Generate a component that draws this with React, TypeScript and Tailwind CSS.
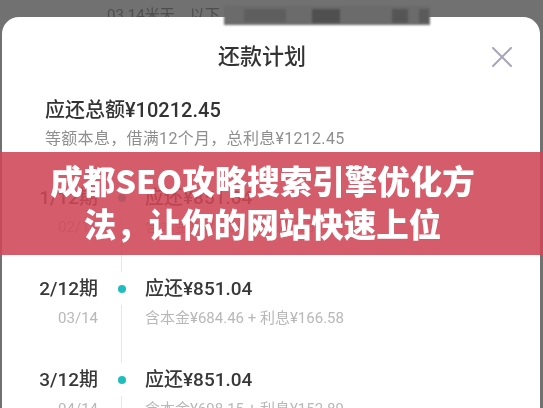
import React from "react";

type Installment = {
  period: string;
  date: string;
  amount: string;
  principal: string;
  interest: string;
};

const installments: Installment[] = [
  { period: "1/12期", date: "02/14", amount: "¥851.04", principal: "¥671.04", interest: "¥180.00" },
  { period: "2/12期", date: "03/14", amount: "¥851.04", principal: "¥684.46", interest: "¥166.58" },
  { period: "3/12期", date: "04/14", amount: "¥851.04", principal: "¥698.15", interest: "¥152.89" },
];

const bodyFont = "font-['Roboto','Noto_Sans_CJK_SC',sans-serif]";

export default function App() {
  return (
    <div className={`relative w-[543px] h-[408px] overflow-hidden bg-[#717171] ${bodyFont} blur-[0.4px]`}>

      {/* BACKGROUND PAGE (behind the sheet) */}
      <div className="h-[17px] pl-[107px] overflow-hidden">
        <span className="block text-[15px] leading-[15px] pt-[8px] text-[#4e4e4e]">
          03.14米天　以下
        </span>
      </div>

      {/* MOSAIC STRIP */}
      <div className="absolute left-[224px] top-[6px] w-[206px] h-[19px] bg-[#6b6b6b] flex items-center blur-[1px]">
        <div className="ml-[20px] w-[42px] h-[13px] bg-[#5e5e5e]" />
        <div className="ml-[26px] w-[28px] h-[14px] bg-[#4f4f4f]" />
        <div className="ml-[52px] w-[16px] h-[14px] bg-[#555]" />
        <div className="ml-[11px] w-[10px] h-[14px] bg-[#5a5a5a]" />
      </div>

      {/* SHEET */}
      <div className="ml-[2px] mr-[3px] h-[400px] bg-white rounded-t-[17px]">

        {/* HEADER */}
        <div className="relative pt-[24px] flex justify-center pr-[18px]">
          <h1 className="text-[22px] leading-[32px] font-medium text-[#333]">
            还款计划
          </h1>
          <svg
            className="absolute left-[488px] top-[28px]"
            width="24"
            height="24"
            viewBox="0 0 24 24"
            fill="none"
            stroke="#a6a6b6"
            strokeWidth="2"
            strokeLinecap="round"
          >
            <path d="M3 3L21 21M21 3L3 21" />
          </svg>
        </div>

        {/* SUMMARY */}
        <div className="pl-[43px] mt-[22px]">
          <p className="text-[20px] leading-[30px] font-medium text-[#333]">
            应还总额¥10212.45
          </p>
          <p className="mt-[2px] text-[16px] leading-[24px] tracking-[0.3px] text-[#8e8e8e]">
            等额本息，借满12个月，总利息¥1212.45
          </p>
        </div>

        {/* TIMELINE */}
        <div className="mt-[33px]">
          {installments.map((item) => (
            <div key={item.period} className="flex h-[91px]">

              {/* PERIOD */}
              <div className="w-[96px] text-right">
                <p className="text-[19px] leading-[28px] font-medium text-[#383838]">
                  {item.period}
                </p>
                <p className="text-[15px] leading-[30px] text-[#b8b8b8]">
                  {item.date}
                </p>
              </div>

              {/* DOT + LINE */}
              <div className="w-[47px] flex flex-col items-center">
                <div className="h-[28px] flex items-center">
                  <div className="w-[8px] h-[8px] rounded-full bg-[#1fbdbd]" />
                </div>
                <div className="mt-[2px] mb-[3px] w-px flex-1 bg-[#e6e6e6]" />
              </div>

              {/* AMOUNT */}
              <div>
                <p className="text-[19px] leading-[28px] font-medium text-[#383838]">
                  应还{item.amount}
                </p>
                <p className="text-[15px] leading-[30px] text-[#b8b8b8]">
                  含本金{item.principal} + 利息{item.interest}
                </p>
              </div>

            </div>
          ))}
        </div>

      </div>

      {/* TITLE BANNER */}
      <div className="absolute left-0 top-[152px] w-full h-[103px] bg-[#cf4555]/[0.88] flex flex-col items-center justify-center pr-[18px] pb-[5px]">
        <p className="font-['Noto_Sans_CJK_SC',sans-serif] font-black text-white text-[32.5px] leading-[43px] text-center">
          成都SEO攻略搜索引擎优化方
          <br />
          法，让你的网站快速上位
        </p>
      </div>

    </div>
  );
}
